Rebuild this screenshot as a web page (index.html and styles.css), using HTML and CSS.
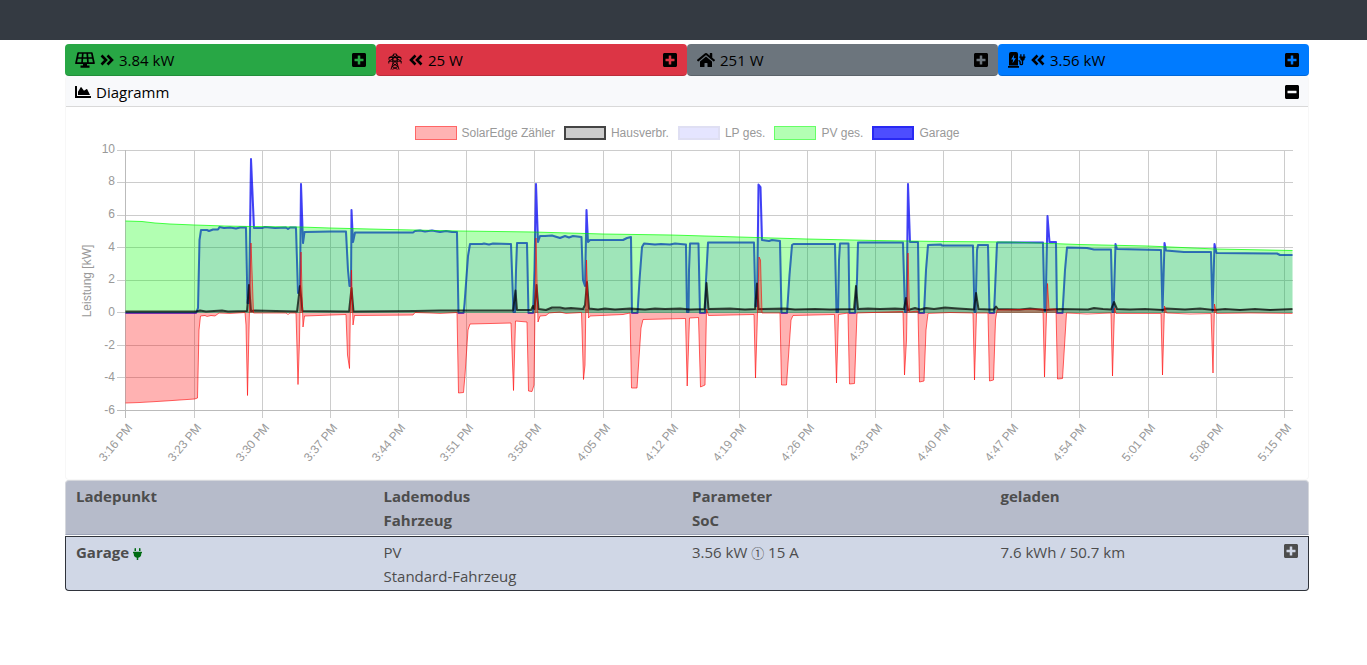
FILE: index.html
```html
<!DOCTYPE html>
<html lang="de">
<head>
<meta charset="utf-8">
<meta name="viewport" content="width=device-width, initial-scale=1">
<title>Garage – Übersicht</title>
<link rel="stylesheet" href="styles.css">
</head>
<body>
<svg class="sprite" aria-hidden="true">
  <symbol id="i-plus" viewBox="0 32 448 448"><path d="M400 32H48C21.500 32 0 53.500 0 80v352c0 26.500 21.500 48 48 48h352c26.500 0 48-21.500 48-48V80c0-26.500-21.500-48-48-48zm-32 252c0 6.600-5.400 12-12 12h-92v92c0 6.600-5.400 12-12 12h-56c-6.600 0-12-5.400-12-12v-92H92c-6.600 0-12-5.400-12-12v-56c0-6.600 5.400-12 12-12h92v-92c0-6.600 5.400-12 12-12h56c6.600 0 12 5.400 12 12v92h92c6.600 0 12 5.400 12 12v56z"/></symbol>
  <symbol id="i-minus" viewBox="0 32 448 448"><path d="M400 32H48C21.500 32 0 53.500 0 80v352c0 26.500 21.500 48 48 48h352c26.500 0 48-21.500 48-48V80c0-26.500-21.500-48-48-48zM92 296c-6.600 0-12-5.400-12-12v-56c0-6.600 5.400-12 12-12h264c6.600 0 12 5.400 12 12v56c0 6.600-5.400 12-12 12H92z"/></symbol>
  <symbol id="i-right" viewBox="0 0 14 12"><path d="M1.500 1.500 6 6l-4.500 4.500M7.500 1.500 12 6l-4.500 4.500" fill="none" stroke="currentColor" stroke-width="2.600"/></symbol>
  <symbol id="i-left" viewBox="0 0 14 12"><path d="M6.500 1.500 2 6l4.500 4.500M12.500 1.500 8 6l4.500 4.500" fill="none" stroke="currentColor" stroke-width="2.600"/></symbol>
  <symbol id="i-solar" viewBox="0 0 20 16"><path d="M3.200 1h13.600L19 11.200H1zM2.200 6h15.600M7.800 1 7 11.200M12.200 1l.8 10.200" fill="none" stroke="currentColor" stroke-width="1.700" stroke-linejoin="round"/><path d="M8 11h4v2.500h2.500V15.800h-9V13.500H8z"/></symbol>
  <symbol id="i-pylon" viewBox="0 0 14 17"><path d="M5.500 1h3l1 5-.5 4 2 6.500M5.500 1l-1 5 .5 4-2 6.500M5.500 2.500 1 4.500v2.300M8.500 2.500l4.500 2v2.300M1 4.500h12M4.500 6 .8 8.200v2.300M9.500 6l3.700 2.200v2.300M.8 8.200h12.400M5.200 2l4 4.500-4.300 4 5.100 3-5.500 2.800M8.800 2l-4 4.500 4.300 4-5.100 3 5.500 2.800" fill="none" stroke="currentColor" stroke-width=".9"/></symbol>
  <symbol id="i-home" viewBox="0 32 576 448"><path d="M280.370 148.260L96 300.110V464a16 16 0 0 0 16 16l112.060-.290a16 16 0 0 0 15.920-16V368a16 16 0 0 1 16-16h64a16 16 0 0 1 16 16v95.640a16 16 0 0 0 16 16.050L464 480a16 16 0 0 0 16-16V300L295.670 148.260a12.190 12.190 0 0 0-15.300 0zM571.600 251.470L488 182.560V44.050a12 12 0 0 0-12-12h-56a12 12 0 0 0-12 12v72.610L318.470 43a48 48 0 0 0-61 0L4.340 251.470a12 12 0 0 0-1.600 16.900l25.500 31A12 12 0 0 0 45.150 301l235.220-193.740a12.190 12.190 0 0 1 15.300 0L530.900 301a12 12 0 0 0 16.900-1.600l25.500-31a12 12 0 0 0-1.700-16.930z"/></symbol>
  <symbol id="i-station" viewBox="0 0 18 16"><path fill-rule="evenodd" d="M1 2Q1 0 3 0h5q2 0 2 2v11.500H1zM6.300 2.600 3.200 7.500h2l-.7 3.800 3.400-5H5.700z"/><path d="M0 14h11v1.800H0zM12.200 2.200h1.300v2.300h1.800V2.200h1.300v2.300h.9v1.300h-.6q0 2.500-1.700 3v2.600q0 1.900-1.900 1.900T11.400 11.400V10q0-.7-.9-.7V8q2.300 0 2.300 2v1.500q0 .5.500.5t.5-.5V8.800q-1.700-.6-1.700-3h-.8V4.500h.9z"/></symbol>
  <symbol id="i-area" viewBox="0 64 512 384"><path d="M500 384c6.600 0 12 5.400 12 12v40c0 6.600-5.400 12-12 12H12c-6.600 0-12-5.400-12-12V76c0-6.600 5.400-12 12-12h40c6.600 0 12 5.400 12 12v308h436zM372.700 159.500L288 216l-85.300-113.700c-5.100-6.800-15.500-6.300-19.900 1L96 248v104h384l-89.900-187.800c-3.200-6.500-11.400-8.700-17.400-4.700z"/></symbol>
  <symbol id="i-plug" viewBox="0 0 384 512"><path d="M320,32a32,32,0,0,0-64,0v96h64Zm48,128H16A16,16,0,0,0,0,176v32a16,16,0,0,0,16,16H32v32A160.070,160.070,0,0,0,160,412.800V512h64V412.800A160.070,160.070,0,0,0,352,256V224h16a16,16,0,0,0,16-16V176A16,16,0,0,0,368,160ZM128,32a32,32,0,0,0-64,0v96h64Z"/></symbol>
</svg>

<header class="navbar"></header>

<main class="content">
  <section class="cards">
    <div class="card card-pv"><svg class="icon w20"><use href="#i-solar"/></svg><svg class="icon w14"><use href="#i-right"/></svg><span>3.84 kW</span><button class="toggle" aria-label="PV aufklappen"><svg><use href="#i-plus"/></svg></button></div>
    <div class="card card-grid"><svg class="icon pylon"><use href="#i-pylon"/></svg><svg class="icon w14"><use href="#i-left"/></svg><span>25 W</span><button class="toggle" aria-label="Netz aufklappen"><svg><use href="#i-plus"/></svg></button></div>
    <div class="card card-home"><svg class="icon w18"><use href="#i-home"/></svg><span>251 W</span><button class="toggle" aria-label="Haus aufklappen"><svg><use href="#i-plus"/></svg></button></div>
    <div class="card card-charge"><svg class="icon w18"><use href="#i-station"/></svg><svg class="icon w14"><use href="#i-left"/></svg><span>3.56 kW</span><button class="toggle" aria-label="Ladepunkte aufklappen"><svg><use href="#i-plus"/></svg></button></div>
  </section>

  <section class="panel">
    <div class="panel-head"><svg class="icon w16"><use href="#i-area"/></svg><span>Diagramm</span><button class="toggle" aria-label="Diagramm zuklappen"><svg><use href="#i-minus"/></svg></button></div>
    <ul class="legend">
      <li><i class="swatch s-red"></i>SolarEdge Zähler</li>
      <li><i class="swatch s-black"></i>Hausverbr.</li>
      <li><i class="swatch s-lp"></i>LP ges.</li>
      <li><i class="swatch s-pv"></i>PV ges.</li>
      <li><i class="swatch s-blue"></i>Garage</li>
    </ul>
    <svg class="chart" viewBox="66 142 1242 337" role="img" aria-label="Leistung in kW">
      <path class="grid" d="M117 150.500H1293M117 182.500H1293M117 215.500H1293M117 247.500H1293M117 280.500H1293M117 312.500H1293M117 345.500H1293M117 377.500H1293M194.500 150V418M262.500 150V418M330.500 150V418M398.500 150V418M466.500 150V418M534.500 150V418M603.500 150V418M671.500 150V418M739.500 150V418M807.500 150V418M875.500 150V418M943.500 150V418M1011.500 150V418M1079.500 150V418M1148.500 150V418M1216.500 150V418M1284.500 150V418"/>
      <path class="axis" d="M117 410.500H1293M125.500 150V418"/>
      <defs>
        <path id="garage" d="M125.500 313H196L198 308 199.500 240 201 230H207L209 231 213 229.500H218L219.500 227 224 228 230 227.500 236 228.500 240 227.500H246L247.500 303H249L251 159 254 228 262 228 265 227 275 228 286 227.500 288 229 290 227.500H296L298 293 300 286 301 184 303 243 304.500 232 330 231.500H346L348 270 349.500 286H351L351.500 210 353 242 355 232.500H413L415 231 420 230.500 425 231.500 432 230.500 440 232 446 231 452 232 457 232 458.500 313H463.500L464.500 304 468 256 470 244 482 244 484 243.500 489 244.500 493 243.500 511 244 513.500 312H515L516 270 517 243H527L528.500 313H533L534.500 270 536 184 538 242 540 236 545 236 552 235.500 560 238 565 236 569 237.500 573 236 581.500 237 583 280 585 286 586.500 210 588 242 590 240H623L627 238 631 237 632 313H637.500L639.500 280 642 247 644 243.500 655 244.500 661 244 670 244.500 675 243.500 686 244.500 687 312H688.500L689 270 690 243.500H698.500L700 313H705L706 280 708 242.500H754L755.500 306H757L758.500 184.500 760.500 187 762 240 769 241 772 240 780 241 781.500 313H787L789.500 275 792 245 793.500 244H835L836.500 312H838L839 260 840 243.500H848.500L849.500 313H855L857 280 858 242.500H903L905 312H906.500L908 184 910 242H918L919 313H924L926 270 928 245 941 244.500 942 245.500H973L974.500 312H975.500L977 250 978 245H988L989.500 313H994L995 290 997 243 998 242.500H1043L1044.500 311H1045.500L1047.500 216 1049.500 242H1056L1057 313H1062.500L1065 270 1067 247.500 1087 248 1094 249.500H1111L1112.500 312H1113.500L1115.500 244 1117 249 1161 250 1162.500 311 1164.500 243 1166 250.500 1184 252H1211L1212.500 311 1214.500 244 1216.500 253 1277 253.500 1280 255H1292.500"/>
        <path id="grid-meter" d="M125.500 403 140 402.500 165 401 194.500 399 197.500 398 199 330 200.500 316 205 315.500 207 316.500 211 315.500 215 316 219 313 230 313.500 245 312.500 246 325 247.500 395.500 249 330 251 243 252 270 253.500 313 286 313 288 314.500 290 313H296L298 384.500 299.500 340 301 252 303 327 304.500 316 346 314.500 347.500 355 349.500 368.500 350.500 300 351.500 270 353 325 354.500 315.500 413 315 415 312.500 430 313 440 313.500 457 312.500 458.500 393 463.500 392.500 465 375 468 330 470 324 511 323 513.500 390.500 515.500 321 527 322 528.500 391 532 391.500 534 385 536 238 538 322 540 316 546 315.500 549 313 560 312 566 313.500 581.500 312.500 583.500 379.500 585 365 586.500 260 588.500 318 590 316 623 314.500 630 313 631.500 388 637 388 641 328 643 319.500 685.500 318.500 687.200 386 689.500 318 698.500 317.500 700.500 387 705 385 706.500 309 708.500 315.500 754 314.500 755.500 378 757 330 759 257 760.500 260 762 313 780 313 781.500 385 786.500 385 791 320 793 315.500 834.500 314.500 836.500 383 838.500 314.500 848 313 849.500 384 854.500 383.500 857 313 903 311.500 904.500 375 906.500 340 908 253 909.500 312 918 311 919.500 382 924 381 926 330 928 313.500 950 312.500 973 313 974.500 380 976.500 313 988 313 989.500 381 993.500 380 995.500 320 997 310 1043 309 1044.500 377 1046 330 1047.500 283.500 1049 309 1056 309 1057.500 379 1062.500 378.500 1066.500 313 1087 314 1111 313 1112.500 376 1114.500 308 1116 313.500 1161 313.500 1162.500 375 1164.500 306 1166.500 313 1190 314 1211 313.500 1213 373 1214.500 304 1216.500 313.500 1250 313 1292.500 313.500"/>
        <path id="house" d="M125.500 311.500 196 311.500 200 310.500 206 311.500 222 310.500 228 311.500 247 311 249 285 251 311 255 310.500 297 311.500 300 286 302.500 311 349 311.500 351.500 288 353.500 311.500 415 311 440 310.500 513 310.500 515.500 290.500 517 310 531 310 533 306 534.500 309 536.500 285 538.500 309 546 310 552 307.500 560 307.500 565 308.500 571 308 583 309 585 305 587 282 589 308.500 598 309.500 605 308.500 615 309.500 630 308.500 645 309.500 655 308.500 665 309 680 308.500 690 309.500 704.500 309 706.500 283 708.500 309 730 308.500 745 309.500 755 309 757 283.500 758.500 309 785 308.500 795 309.500 815 309 830 309.500 854 309 856 286 858 309 868 308.500 880 309 895 308.500 904 309 906 298 908 310 915 308 920 309.500 926 308 934 309 945 307.500 958 308.500 974 309.500 976 293 978.500 309 990 309.500 994 309.500 996 306.500 998 309 1020 309.500 1030 308.500 1045 310 1060 309 1088 309.500 1094 308 1103 309 1111 309.500 1114 302 1117 309 1130 309.500 1145 309 1163 310 1166 308.500 1185 309.500 1200 308.500 1214 310 1225 309 1240 310 1255 309 1270 310 1292.500 309"/>
        <path id="pv" d="M125.500 221 142 221.500 155 223 170 224 194.500 225 225 226 250 226.500 300 227 330 228 390 229.500 460 231 534 232 603 234 671 235 739 237 807 239 875 240.500 943 241.500 1011 242 1079 244.500 1148 246 1216 249 1292.500 250.500"/>
        <clipPath id="plot"><path d="M125 150H1293V411H125z"/></clipPath>
      </defs>
      <g clip-path="url(#plot)" class="series">
        <use href="#garage" class="garage-line"/>
        <path class="pv-fill" d="M125.500 313V221L142 221.500 155 223 170 224 194.500 225 225 226 250 226.500 300 227 330 228 390 229.500 460 231 534 232 603 234 671 235 739 237 807 239 875 240.500 943 241.500 1011 242 1079 244.500 1148 246 1216 249 1292.500 250.500V313z"/>
        <use href="#pv" class="pv-line"/>
        <path class="lp-fill" d="M196 313 198 308 199.500 240 201 230 218 229.500 219.500 227 246 228 247.500 303H249L251 159 254 228H296L298 293 300 286 301 184 303 243 304.500 232H346L348 270 349.500 286H351L351.500 210 353 242 355 232.500H413L415 231 457 232 458.500 313H463.500L468 256 470 244H511L513.500 312H515L517 243H527L528.500 313H533L536 184 538 242 540 236 581.500 237 583 280 585 286 586.500 210 588 242 590 240H623L631 237 632 313H637.500L642 247 644 243.500 686 244.500 687 312H688.500L690 243.500H698.500L700 313H705L708 242.500H754L755.500 306H757L758.500 184.500 760.500 187 762 240 780 241 781.500 313H787L792 245 793.500 244H835L836.500 312H838L840 243.500H848.500L849.500 313H855L858 242.500H903L905 312H906.500L908 184 910 242H918L919 313H924L926 270 928 245 973 245.500 974.500 312H975.500L978 245H988L989.500 313H994L997 243 1043 242.500 1044.500 311H1045.500L1047.500 216 1049.500 242H1056L1057 313H1062.500L1067 247.500 1087 248 1094 249.500H1111L1112.500 312H1113.500L1115.500 244 1117 249 1161 250 1162.500 311 1164.500 243 1166 250.500 1184 252H1211L1212.500 311 1214.500 244 1216.500 253 1277 253.500 1280 255H1292.500V313z"/>
        <use href="#garage" class="lp-line"/>
        <use href="#house" class="house-fill"/>
        <path class="house-base" d="M125.500 311.500H534L552 309H1292.500V313H125.500z"/>
        <use href="#house" class="house-line"/>
        <path class="meter-fill" d="M125.500 313V403L165 401 194.500 399 197.500 398 199 330 200.500 316H215L219 313H245L246 325 247.500 395.500 249 330 251 243 252 270 253.500 313H296L298 384.500 299.500 340 301 252 303 327 304.500 316 346 314.500 347.500 355 349.500 368.500 350.500 300 351.500 270 353 325 354.500 315.500 413 315 415 313H457L458.500 393 463.500 392.500 465 375 468 330 470 324 511 323 513.500 390.500 515.500 321 527 322 528.500 391 532 391.500 534 385 536 238 538 322 540 316 546 315.500 549 313H581.500L583.500 379.500 585 365 586.500 260 588.500 318 590 316 623 314.500 630 313 631.500 388 637 388 641 328 643 319.500 685.500 318.500 687.200 386 689.500 318 698.500 317.500 700.500 387 705 385 706.500 309 708.500 315.500 754 314.500 755.500 378 757 330 759 257 760.500 260 762 313H780L781.500 385H786.500L791 320 793 315.500 834.500 314.500 836.500 383 838.500 314.500 848 313 849.500 384 854.500 383.500 857 313 903 311.500 904.500 375 906.500 340 908 253 909.500 312 918 311 919.500 382 924 381 926 330 928 313H973L974.500 380 976.500 313H988L989.500 381 993.500 380 995.500 320 997 310 1043 309 1044.500 377 1046 330 1047.500 283.500 1049 309H1056L1057.500 379 1062.500 378.500 1066.500 313H1111L1112.500 376 1114.500 308 1116 313H1161L1162.500 375 1164.500 306 1166.500 313H1211L1213 373 1214.500 304 1216.500 313H1292.500z"/>
        <use href="#grid-meter" class="meter-line"/>
      </g>
      <g class="label y-label">
        <text x="115" y="153">10</text><text x="115" y="185">8</text><text x="115" y="218">6</text><text x="115" y="251">4</text><text x="115" y="283">2</text><text x="115" y="316">0</text><text x="115" y="349">-2</text><text x="115" y="381">-4</text><text x="115" y="414">-6</text>
      </g>
      <text class="label mid" transform="translate(91 281) rotate(-90)">Leistung [kW]</text>
      <g class="label x-label">
        <text transform="translate(133 428) rotate(-50)">3:16 PM</text><text transform="translate(202 428) rotate(-50)">3:23 PM</text><text transform="translate(270 428) rotate(-50)">3:30 PM</text><text transform="translate(338 428) rotate(-50)">3:37 PM</text><text transform="translate(406 428) rotate(-50)">3:44 PM</text><text transform="translate(474 428) rotate(-50)">3:51 PM</text><text transform="translate(542 428) rotate(-50)">3:58 PM</text><text transform="translate(611 428) rotate(-50)">4:05 PM</text><text transform="translate(679 428) rotate(-50)">4:12 PM</text><text transform="translate(747 428) rotate(-50)">4:19 PM</text><text transform="translate(815 428) rotate(-50)">4:26 PM</text><text transform="translate(883 428) rotate(-50)">4:33 PM</text><text transform="translate(951 428) rotate(-50)">4:40 PM</text><text transform="translate(1019 428) rotate(-50)">4:47 PM</text><text transform="translate(1087 428) rotate(-50)">4:54 PM</text><text transform="translate(1156 428) rotate(-50)">5:01 PM</text><text transform="translate(1224 428) rotate(-50)">5:08 PM</text><text transform="translate(1292 428) rotate(-50)">5:15 PM</text>
      </g>
    </svg>
  </section>

  <table class="points">
    <thead>
      <tr><th>Ladepunkt</th><th>Lademodus<br>Fahrzeug</th><th>Parameter<br>SoC</th><th>geladen</th></tr>
    </thead>
    <tbody>
      <tr>
        <td><strong>Garage</strong> <svg class="plug"><use href="#i-plug"/></svg></td>
        <td>PV<br>Standard-Fahrzeug</td>
        <td>3.56 kW <span class="phase">①</span> 15 A</td>
        <td><div class="split"><span>7.6 kWh / 50.7 km</span><button class="toggle" aria-label="Garage aufklappen"><svg><use href="#i-plus"/></svg></button></div></td>
      </tr>
    </tbody>
  </table>
</main>
</body>
</html>
```
FILE: styles.css
```css
* { box-sizing: border-box; }
body { margin: 0; background: #fff; color: #000; font: 15px/24px "Open Sans", "Noto Sans", sans-serif; }
.sprite { position: absolute; width: 0; height: 0; }
.navbar { height: 40px; background: #343a42; }
.content { padding: 4px 58px 0 65px; }

.cards { display: grid; grid-template-columns: repeat(4, 1fr); }
.card { display: flex; align-items: center; gap: 5px; height: 32px; padding: 0 10px; border-radius: 4px; border-bottom: 1px solid rgba(0, 0, 0, .15); }
.card-pv { background: #28a745; }
.card-grid { background: #dc3545; }
.card-home { background: #6c757d; }
.card-charge { background: #007bff; }

.icon { height: 16px; fill: currentColor; flex: none; }
.w14 { width: 14px; height: 12px; }
.w16 { width: 16px; height: 12px; }
.w18 { width: 18px; }
.w20 { width: 20px; }
.pylon { width: 18px; height: 17px; margin-top: 4px; }

.toggle { display: block; flex: none; width: 14px; height: 14px; margin-left: auto; padding: 0; border: 0; background: none; color: inherit; }
.toggle svg { display: block; width: 14px; height: 14px; fill: currentColor; }

.panel { border: 1px solid #f7f7f7; border-top: 0; border-radius: 4px; }
.panel-head { display: flex; align-items: center; gap: 5px; height: 31px; padding: 2px 9px 0; background: #f8f9fb; border-bottom: 1px solid #d9d9d9; }
.legend { display: flex; justify-content: center; gap: 9px; margin: 0; padding: 19px 0 2px; list-style: none; font: 12px/12px "Liberation Sans", Arial, sans-serif; color: #999; }
.legend li { display: flex; align-items: center; gap: 5px; }
.swatch { width: 42px; height: 14px; border: 1px solid; }
.s-red { background: #ffb3b3; border-color: #ff6666; }
.s-black { background: #ccc; border: 2px solid #444; }
.s-lp { background: #e5e5ff; border: 2px solid #dfdff3; }
.s-pv { background: #b3ffb3; border-color: #66ff66; }
.s-blue { background: #4d4dff; border: 2px solid #2929f3; }

.chart { display: block; width: 100%; }
.grid { fill: none; stroke: #ccc; }
.axis { fill: none; stroke: #bbb; }
.series { fill: none; stroke-linejoin: round; }
.garage-line { stroke: rgba(0, 0, 255, .7); stroke-width: 2; }
.pv-fill { fill: rgba(0, 255, 0, .3); }
.pv-line { stroke: rgba(0, 255, 0, .7); }
.lp-fill { fill: rgba(0, 0, 255, .1); }
.lp-line { stroke: rgba(0, 0, 160, .1); stroke-width: 2; }
.house-fill, .house-base { fill: rgba(0, 0, 0, .2); }
.house-line { stroke: rgba(0, 0, 0, .7); stroke-width: 2; }
.meter-fill { fill: rgba(255, 0, 0, .3); }
.meter-line { stroke: rgba(255, 0, 0, .6); }
.label { font: 12px "Liberation Sans", Arial, sans-serif; fill: #999; }
.x-label, .y-label { text-anchor: end; }
.mid { text-anchor: middle; }

.points { width: 100%; border-collapse: separate; border-spacing: 0; table-layout: fixed; color: #4d4d4d; }
.points th, .points td { height: 55px; padding: 3px 10px 2px; text-align: left; vertical-align: top; }
.points th { background: #b6bbca; border-top: 1px solid #d5d7dc; border-bottom: 1px solid #9ca3b7; width: 24.8%; }
.points th:last-child { width: auto; }
.points td { background: #d0d7e6; border-top: 1px solid #2f333b; border-bottom: 1px solid #2f333b; }
.points th:first-child { border-left: 1px solid #d5d7dc; border-top-left-radius: 4px; }
.points th:last-child { border-right: 1px solid #d5d7dc; border-top-right-radius: 4px; }
.points td:first-child { border-left: 1px solid #2f333b; border-bottom-left-radius: 4px; }
.points td:last-child { border-right: 1px solid #2f333b; border-bottom-right-radius: 4px; }
.points tbody::before { content: ""; display: block; height: 1px; }
.plug { width: 9px; height: 12px; fill: #006b12; vertical-align: -2px; }
.phase { font-family: "Noto Sans CJK SC", sans-serif; font-size: 13px; line-height: 16px; }
.split { display: flex; align-items: flex-start; }
.split .toggle { margin-top: 4px; }
```
